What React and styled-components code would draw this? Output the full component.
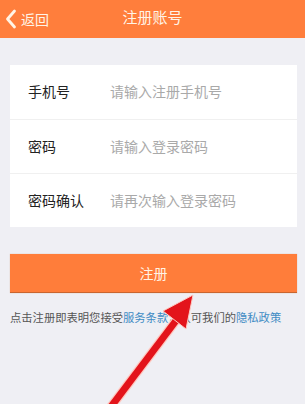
import React from "react";
import styled, { createGlobalStyle } from "styled-components";

const GlobalStyle = createGlobalStyle`
  html, body {
    margin: 0;
    padding: 0;
    background: #efeff4;
    font-family: "Noto Sans CJK SC", "Noto Sans", sans-serif;
  }
`;

const Page = styled.div`
  position: relative;
  width: 305px;
  height: 404px;
  overflow: hidden;
  background: #efeff4;
`;

const Header = styled.div`
  height: 38px;
  background: #ff7e3c;
  display: flex;
  align-items: center;
  position: relative;
  color: #fff4e6;
`;

const Back = styled.div`
  display: flex;
  align-items: center;
  gap: 4px;
  padding-left: 5px;
  font-size: 14px;
  z-index: 1;
`;

const Title = styled.div`
  position: absolute;
  left: 0;
  right: 0;
  text-align: center;
  font-size: 15px;
  line-height: 38px;
  top: -2px;
`;

const Card = styled.div`
  margin: 27px 8px 0 10px;
  background: #fff;
  display: flex;
  flex-direction: column;
`;

const Row = styled.div`
  height: 54px;
  display: flex;
  align-items: center;
  padding-left: 18px;
  padding-bottom: 2px;
  border-top: ${(p) => (p.first ? "none" : "1px solid #f0f0f0")};
  box-sizing: border-box;
`;

const Label = styled.div`
  width: 82px;
  font-size: 14px;
  color: #222;
`;

const Placeholder = styled.div`
  font-size: 14px;
  color: #a9a9a9;
`;

const Button = styled.div`
  margin: 27px 8px 0 10px;
  height: 38px;
  background: #ff7d3a;
  border-bottom: 1px solid #c9652f;
  box-shadow: 0 0 1px rgba(180, 90, 40, 0.4);
  display: flex;
  align-items: center;
  justify-content: center;
  color: #fff4e6;
  font-size: 14px;
`;

const Terms = styled.div`
  margin: 16px 0 0 10px;
  font-size: 11.3px;
  color: #555;
  white-space: nowrap;
`;

const Link = styled.span`
  color: #3f8cc4;
`;

const Arrow = styled.svg`
  position: absolute;
  left: 0;
  top: 0;
  pointer-events: none;
`;

export default function App() {
  return (
    <Page>
      <GlobalStyle />
      <Header>
        <Back>
          <svg width="12" height="20" viewBox="0 0 12 20">
            <path d="M9.5 2 L2.5 10 L9.5 18" fill="none" stroke="#fff4e6" strokeWidth="2.8" strokeLinecap="round" strokeLinejoin="round" />
          </svg>
          <span>返回</span>
        </Back>
        <Title>注册账号</Title>
      </Header>
      <Card>
        <Row first>
          <Label>手机号</Label>
          <Placeholder>请输入注册手机号</Placeholder>
        </Row>
        <Row>
          <Label>密码</Label>
          <Placeholder>请输入登录密码</Placeholder>
        </Row>
        <Row>
          <Label>密码确认</Label>
          <Placeholder>请再次输入登录密码</Placeholder>
        </Row>
      </Card>
      <Button>注册</Button>
      <Terms>
        点击注册即表明您接受<Link>服务条款</Link>，认可我们的<Link>隐私政策</Link>
      </Terms>
      <Arrow width="305" height="404" viewBox="0 0 305 404">
        <line x1="110" y1="408" x2="178" y2="318" stroke="#ffc9c0" strokeWidth="9.5" />
        <line x1="110" y1="408" x2="178" y2="318" stroke="#e3141b" strokeWidth="7" />
        <polygon points="193,295 163,311 186,329" fill="#e3141b" stroke="#ffc9c0" strokeWidth="1" strokeLinejoin="round" />
      </Arrow>
    </Page>
  );
}
